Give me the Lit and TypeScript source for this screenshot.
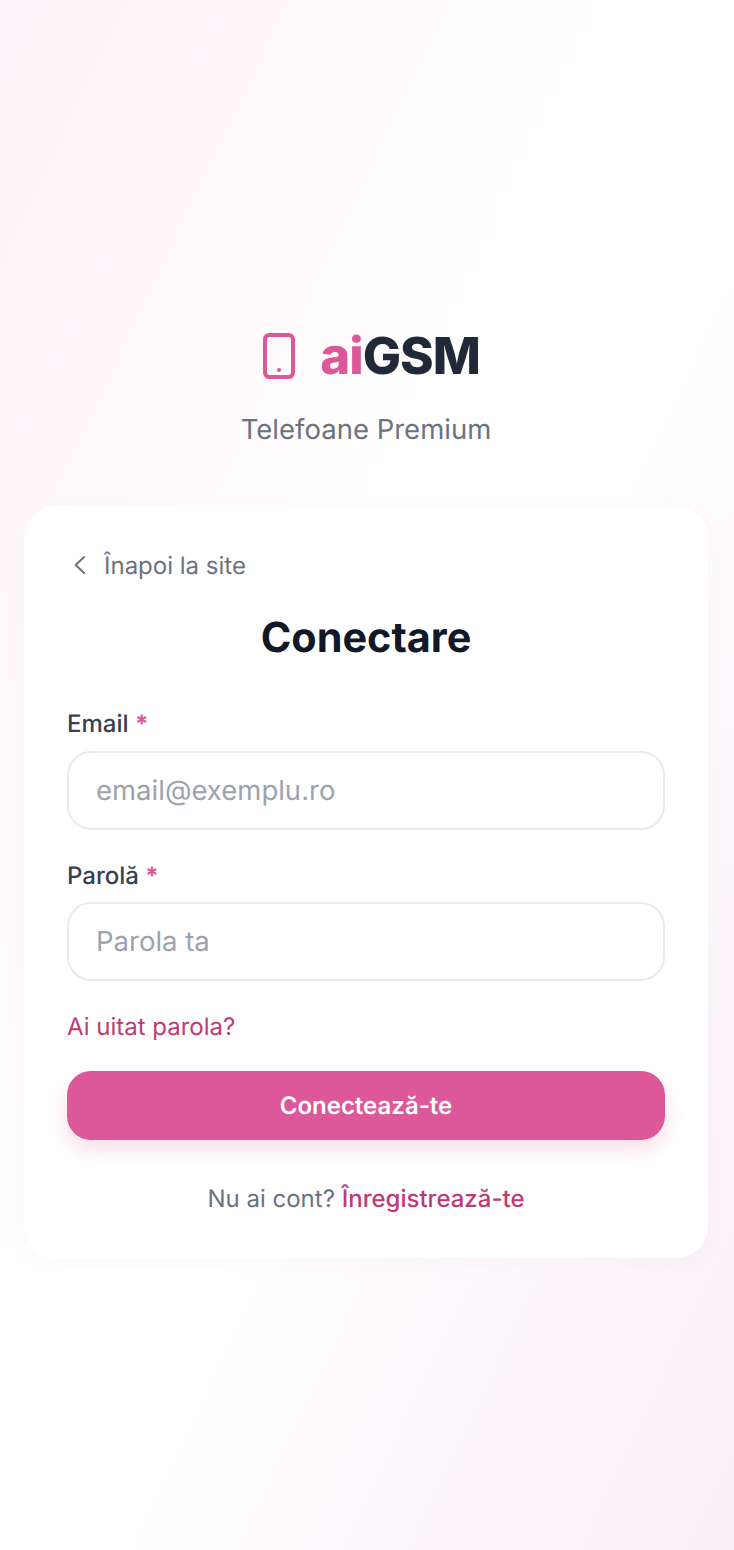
import { LitElement, html, css } from "lit";
import { customElement } from "lit/decorators.js";

@customElement("app-root")
export class AppRoot extends LitElement {
  static styles = css`
    :host {
      display: block;
      font-family: Inter, "Liberation Sans", sans-serif;
      text-rendering: geometricPrecision;
    }
    * { box-sizing: border-box; }
    .page {
      height: 1550px;
      padding: 327px 26px 0 24px;
      background: linear-gradient(to bottom right, #fff4f9 0%, #ffffff 46%, #ffffff 56%, #faeff7 100%);
    }
    .brand {
      display: flex;
      align-items: center;
      justify-content: center;
      gap: 17px;
      height: 58px;
      padding: 2px 0 0 3px;
    }
    .phone { width: 48px; height: 48px; color: #dc5898; display: block; margin-top: -2px; }
    .logo {
      font-size: 51px;
      line-height: 58px;
      font-weight: 800;
      letter-spacing: -1px;
      color: #1f2937;
    }
    .logo span { color: #dc5898; }
    .tagline {
      margin: 24px 0 0;
      text-align: center;
      font-size: 27.5px;
      line-height: 40px;
      color: #6b7280;
    }
    .card {
      margin-top: 57px;
      padding: 43px;
      background: #ffffff;
      border-radius: 32px;
      box-shadow: 0 4px 24px rgba(120, 60, 90, 0.03);
    }
    .back {
      display: flex;
      align-items: center;
      gap: 13px;
      height: 32px;
      color: #6b7280;
      font-size: 24px;
    }
    .back svg { width: 24px; height: 24px; display: block; }
    h1 {
      margin: 31px 0 0;
      text-align: center;
      font-size: 41.4px;
      line-height: 50px;
      font-weight: 700;
      color: #111827;
    }
    .email { margin-top: 46px; }
    .pass { margin-top: 30px; }
    label {
      display: block;
      font-size: 24px;
      line-height: 32px;
      font-weight: 500;
      color: #374151;
    }
    label span { color: #dc5898; font-weight: 700; }
    .box {
      margin-top: 11px;
      height: 79px;
      padding: 0 27px 2px;
      display: flex;
      align-items: center;
      border: 2px solid #e9eaed;
      border-radius: 24px;
      background: #fff;
      font-size: 27.5px;
      color: #9ca3af;
    }
    .pass .box { margin-top: 10px; }
    .forgot { margin-top: 30px; color: #be3a76; font-size: 24px; line-height: 32px; }
    .btn {
      margin-top: 28px;
      height: 69px;
      display: flex;
      align-items: center;
      justify-content: center;
      background: #dc5898;
      color: #fff;
      font-weight: 600;
      font-size: 24px;
      border-radius: 24px;
      box-shadow: 0 10px 20px rgba(220, 88, 152, 0.2);
    }
    .signup { margin-top: 43px; text-align: center; font-size: 24px; line-height: 32px; color: #6b7280; }
    .signup b { color: #be3a76; font-weight: 500; }
  `;

  render() {
    return html`<div class="page">
      <div class="brand">
        <svg class="phone" viewBox="0 0 24 24" fill="none" stroke="currentColor" stroke-width="2" stroke-linecap="round" stroke-linejoin="round">
          <rect x="5" y="1.5" width="14" height="21" rx="2.2"></rect><path d="M12 19h.01"></path>
        </svg>
        <div class="logo"><span>ai</span>GSM</div>
      </div>
      <p class="tagline">Telefoane Premium</p>
      <div class="card">
        <div class="back">
          <svg viewBox="0 0 24 24" fill="none" stroke="currentColor" stroke-width="2" stroke-linecap="round" stroke-linejoin="round"><path d="M17 4 8.7 12 17 20"></path></svg>
          Înapoi la site
        </div>
        <h1>Conectare</h1>
        <div class="email"><label>Email <span>*</span></label><div class="box">email@exemplu.ro</div></div>
        <div class="pass"><label>Parolă <span>*</span></label><div class="box">Parola ta</div></div>
        <div class="forgot">Ai uitat parola?</div>
        <div class="btn">Conectează-te</div>
        <div class="signup">Nu ai cont? <b>Înregistrează-te</b></div>
      </div>
    </div>`;
  }
}
